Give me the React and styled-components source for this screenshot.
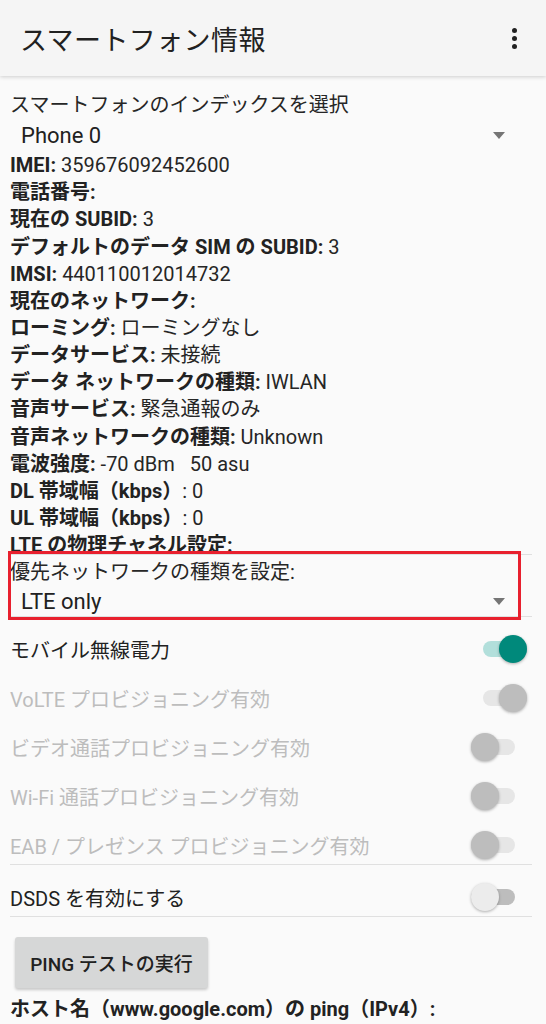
import React from 'react'
import styled, { createGlobalStyle } from 'styled-components'

const GlobalStyle = createGlobalStyle`
  html, body {
    margin: 0;
    padding: 0;
    background: #fafafa;
  }
  body {
    font-family: Roboto, "Noto Sans CJK JP", sans-serif;
    color: #212121;
  }
`

const Screen = styled.div`
  width: 546px;
  height: 1024px;
  overflow: hidden;
  background: #fafafa;
`

const AppBar = styled.header`
  height: 76px;
  background: #f5f5f5;
  display: flex;
  align-items: center;
  justify-content: space-between;
  padding: 0 29px 0 20px;
  box-sizing: border-box;
  box-shadow: 0 1px 4px rgba(0, 0, 0, 0.18);
  position: relative;
  z-index: 1;
`

const Title = styled.h1`
  margin: 0;
  font-size: 27px;
  font-weight: 400;
  color: #212121;
  letter-spacing: 0.4px;
`

const Kebab = styled.div`
  display: flex;
  flex-direction: column;
  gap: 3px;
  span {
    width: 5px;
    height: 5px;
    border-radius: 50%;
    background: #212121;
  }
`

const Content = styled.main`
  padding: 16px 14px 0 10px;
`

const Line = styled.div`
  height: 27.15px;
  font-size: 20px;
  line-height: 27px;
  color: #262626;
  white-space: pre;
  b {
    font-weight: 700;
    color: #222;
  }
`

const Spinner = styled.div`
  display: flex;
  align-items: center;
  justify-content: space-between;
  height: ${p => p.$h || 33}px;
  padding: 0 27px 0 11px;
  font-size: 22px;
  color: #212121;
`

const Arrow = styled.span`
  width: 0;
  height: 0;
  border-left: 6.5px solid transparent;
  border-right: 6.5px solid transparent;
  border-top: 7px solid #757575;
`

const Highlight = styled.section`
  position: relative;
  border-top: 1px solid #e0e0e0;
  border-bottom: 1px solid #e0e0e0;
  margin-top: -5px;
  padding-top: 4px;
  &::after {
    content: "";
    position: absolute;
    left: -2px;
    right: 11px;
    top: -4px;
    bottom: -4px;
    border: 3px solid #e8202e;
    pointer-events: none;
  }
`

const SwitchGroup = styled.section`
  display: flex;
  flex-direction: column;
  gap: 11px;
  padding-top: 13px;
  border-bottom: 1px solid #e0e0e0;
`

const SwitchRow = styled.div`
  height: 38px;
  display: flex;
  align-items: center;
  justify-content: space-between;
  font-size: 20px;
  color: ${p => (p.$disabled ? '#bdbdbd' : '#212121')};
  padding-right: 5px;
`

const SwitchBox = styled.div`
  position: relative;
  width: 56px;
  height: 28px;
`

const Track = styled.div`
  position: absolute;
  top: 6px;
  width: 44px;
  height: 16px;
  border-radius: 8px;
  ${p => (p.$on ? 'right: 0;' : 'left: 0;')}
  background: ${p => p.$color};
`

const Thumb = styled.div`
  position: absolute;
  top: 0;
  width: 28px;
  height: 28px;
  border-radius: 50%;
  ${p => (p.$on ? 'right: 0;' : 'left: 0;')}
  background: ${p => p.$color};
  box-shadow: 0 1px 3px rgba(0, 0, 0, 0.3);
`

function Switch({ on, disabled }) {
  let track, thumb
  if (disabled) {
    track = '#e6e6e6'
    thumb = '#bdbdbd'
  } else if (on) {
    track = '#b2dfdb'
    thumb = '#00897b'
  } else {
    track = '#bdbdbd'
    thumb = '#ececec'
  }
  return (
    <SwitchBox>
      <Track $on={on} $color={track} />
      <Thumb $on={on} $color={thumb} />
    </SwitchBox>
  )
}

const PingButton = styled.button`
  display: block;
  margin: 20px 0 0 5px;
  width: 193px;
  height: 51px;
  border: none;
  border-radius: 3px;
  background: #d6d7d7;
  box-shadow: 0 2px 3px rgba(0, 0, 0, 0.2);
  font-family: inherit;
  font-size: 19px;
  font-weight: 500;
  color: #212121;
  padding: 0;
`

const HostLine = styled.div`
  margin-top: 8px;
  font-size: 20px;
  line-height: 27px;
  font-weight: 700;
  color: #222;
`

const info = [
  ['IMEI:', ' 359676092452600'],
  ['電話番号:', ''],
  ['現在の SUBID:', ' 3'],
  ['デフォルトのデータ SIM の SUBID:', ' 3'],
  ['IMSI:', ' 440110012014732'],
  ['現在のネットワーク:', ''],
  ['ローミング:', ' ローミングなし'],
  ['データサービス:', ' 未接続'],
  ['データ ネットワークの種類:', ' IWLAN'],
  ['音声サービス:', ' 緊急通報のみ'],
  ['音声ネットワークの種類:', ' Unknown'],
  ['電波強度:', ' -70 dBm   50 asu'],
  ['DL 帯域幅（kbps）', ': 0'],
  ['UL 帯域幅（kbps）', ': 0'],
  ['LTE の物理チャネル設定:', ''],
]

const switches = [
  { label: 'モバイル無線電力', on: true },
  { label: 'VoLTE プロビジョニング有効', on: true, disabled: true },
  { label: 'ビデオ通話プロビジョニング有効', disabled: true },
  { label: 'Wi-Fi 通話プロビジョニング有効', disabled: true },
  { label: 'EAB / プレゼンス プロビジョニング有効', disabled: true },
]

export default function App() {
  return (
    <Screen>
      <GlobalStyle />
      <AppBar>
        <Title>スマートフォン情報</Title>
        <Kebab>
          <span />
          <span />
          <span />
        </Kebab>
      </AppBar>
      <Content>
        <Line>スマートフォンのインデックスを選択</Line>
        <Spinner>
          <span>Phone 0</span>
          <Arrow />
        </Spinner>
        {info.map(([label, value]) => (
          <Line key={label}>
            <b>{label}</b>
            {value}
          </Line>
        ))}
        <Highlight>
          <Line>優先ネットワークの種類を設定:</Line>
          <Spinner $h={30}>
            <span>LTE only</span>
            <Arrow />
          </Spinner>
        </Highlight>
        <SwitchGroup>
          {switches.map(s => (
            <SwitchRow key={s.label} $disabled={s.disabled}>
              <span>{s.label}</span>
              <Switch on={s.on} disabled={s.disabled} />
            </SwitchRow>
          ))}
        </SwitchGroup>
        <SwitchGroup>
          <SwitchRow>
            <span>DSDS を有効にする</span>
            <Switch />
          </SwitchRow>
        </SwitchGroup>
        <PingButton>PING テストの実行</PingButton>
        <HostLine>ホスト名（www.google.com）の ping（IPv4）:</HostLine>
      </Content>
    </Screen>
  )
}
